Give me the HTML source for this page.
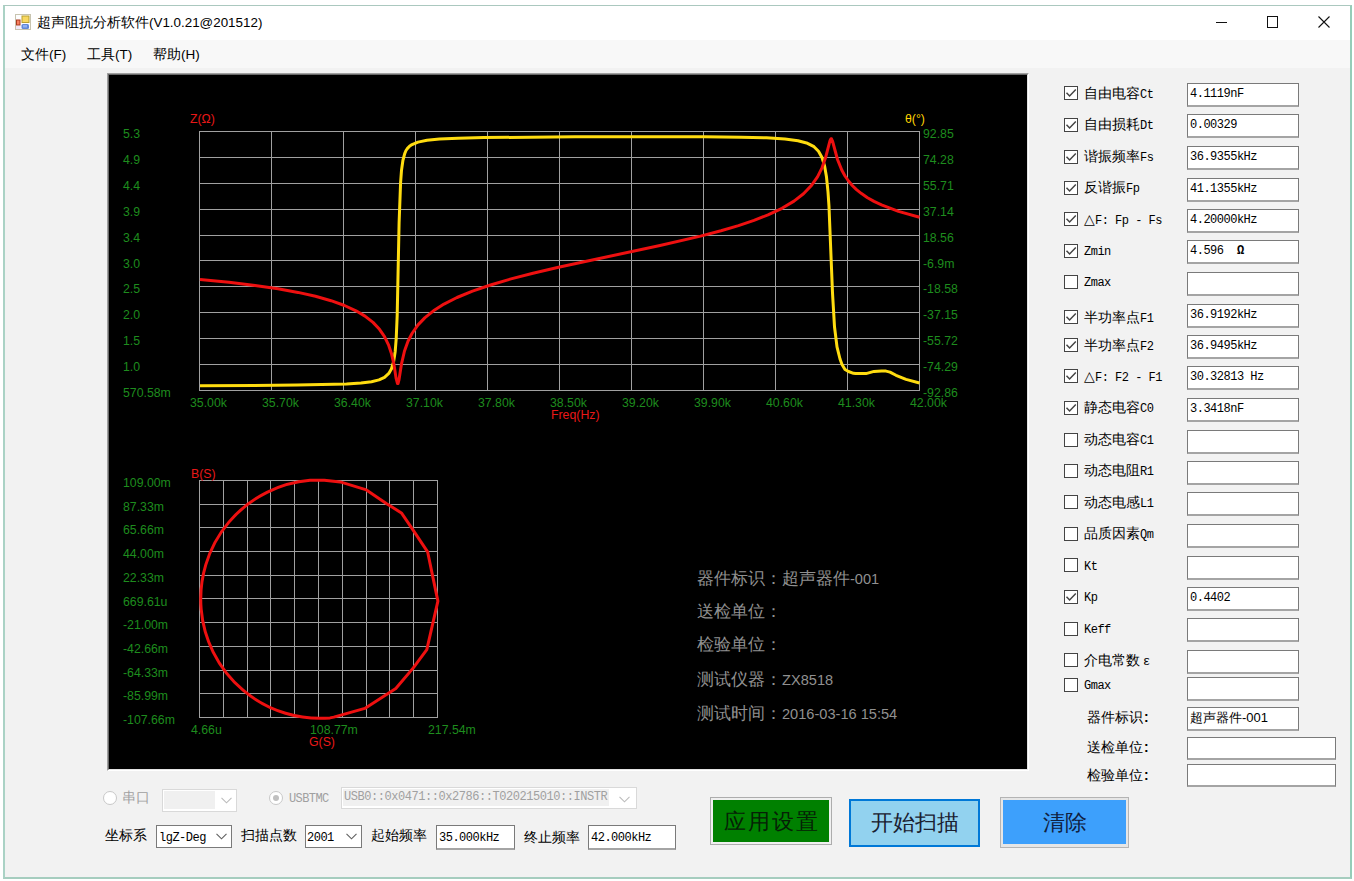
<!DOCTYPE html>
<html><head><meta charset="utf-8"><title>ui</title>
<style>
html,body{margin:0;padding:0}
body{width:1354px;height:881px;overflow:hidden;background:#fff;position:relative;font-family:"Liberation Sans",sans-serif;color:#000}
.a{position:absolute;white-space:nowrap}
.cl{font-size:12.3px;line-height:12px;color:#1e8c1e}
.info{font-size:16.8px;line-height:18px;color:#909090}
.lb{font-size:13.5px;line-height:14px;color:#000}
.m{font-family:"Liberation Mono",monospace;font-size:12px;letter-spacing:-0.5px}
.cb{width:12px;height:12px;border:1px solid #444;background:#fff}
.tb{height:21px;border:1px solid #7a7a7a;border-bottom:2px solid #a4a4a4;background:#fff}
.tbt{font-family:"Liberation Mono",monospace;font-size:12px;letter-spacing:-0.5px;line-height:12px}
</style></head><body>

<div class="a" style="left:3px;top:5px;width:1345px;height:871px;border-left:2px solid #aad2c5;border-right:2px solid #95cdb8;border-top:1px solid #abc8bf;border-bottom:2px solid #a6cdbf;background:#f2f2f2"></div>
<div class="a" style="left:5px;top:6px;width:1345px;height:34px;background:#fff"></div>
<div class="a" style="left:5px;top:40px;width:1345px;height:28px;background:#f8f8f8"></div>
<svg class="a" style="left:15px;top:14px" width="16" height="16" viewBox="0 0 16 16">
<rect x="0.5" y="0.5" width="15" height="15" fill="#fdfdfd" stroke="#c8c4b0"/>
<rect x="1" y="5.5" width="4.5" height="6" fill="#a83a20"/>
<rect x="2" y="6.5" width="2.5" height="4" fill="#f88060"/>
<rect x="1" y="12" width="4.5" height="3" fill="#f0e8f8"/>
<rect x="6.5" y="1.5" width="8" height="7.5" fill="#b8a030"/>
<rect x="7.5" y="2.5" width="6" height="5.5" fill="#f8d860"/>
<rect x="6.5" y="10" width="7.5" height="5" rx="1.5" fill="#6088d8"/>
<rect x="8" y="11" width="4" height="2.5" fill="#90b0f0"/>
</svg>
<div class="a" style="left:37px;top:14px;font-size:13.7px;line-height:17px;color:#000">超声阻抗分析软件<span style="font-size:13.4px">(V1.0.21@201512)</span></div>
<div class="a" style="left:1216px;top:22px;width:11px;height:1px;background:#111"></div>
<div class="a" style="left:1267px;top:16px;width:9px;height:10px;border:1px solid #111"></div>
<svg class="a" style="left:1318px;top:16px" width="12" height="12" viewBox="0 0 12 12"><path d="M0.5 0.5 L11.5 11.5 M11.5 0.5 L0.5 11.5" stroke="#111" stroke-width="1.1"/></svg>
<div class="a" style="left:21px;top:47px;font-size:13.5px;line-height:16px">文件(F)</div>
<div class="a" style="left:87px;top:47px;font-size:13.5px;line-height:16px">工具(T)</div>
<div class="a" style="left:153px;top:47px;font-size:13.5px;line-height:16px">帮助(H)</div>
<div class="a" style="left:107px;top:73px;width:920px;height:696px;border-top:1px solid #a0a0a0;border-left:1px solid #a0a0a0;border-right:1px solid #fff;border-bottom:1px solid #fff"></div>
<div class="a" style="left:108px;top:74px;width:918px;height:694px;border-top:1px solid #696969;border-left:1px solid #696969;border-right:1px solid #e3e3e3;border-bottom:1px solid #e3e3e3;background:#000"></div>
<svg class="a" style="left:0;top:0" width="1354" height="881" viewBox="0 0 1354 881">
<path d="M199.5 131 V391 M199 131.5 H920 M271.5 131 V391 M199 157.5 H920 M343.5 131 V391 M199 183.5 H920 M415.5 131 V391 M199 209.5 H920 M487.5 131 V391 M199 235.5 H920 M559.5 131 V391 M199 260.5 H920 M631.5 131 V391 M199 286.5 H920 M703.5 131 V391 M199 312.5 H920 M775.5 131 V391 M199 338.5 H920 M847.5 131 V391 M199 364.5 H920 M919.5 131 V391 M199 390.5 H920 M199.5 480 V718 M199 480.5 H438 M223.5 480 V718 M199 504.5 H438 M247.5 480 V718 M199 527.5 H438 M270.5 480 V718 M199 551.5 H438 M294.5 480 V718 M199 575.5 H438 M318.5 480 V718 M199 598.5 H438 M342.5 480 V718 M199 622.5 H438 M366.5 480 V718 M199 646.5 H438 M389.5 480 V718 M199 670.5 H438 M413.5 480 V718 M199 693.5 H438 M437.5 480 V718 M199 717.5 H438" stroke="#a0a0a0" stroke-width="1" fill="none"/>
<path d="M200.0 385.8 L297.0 385.1 L346.5 384.0 L361.0 383.0 L371.5 381.7 L379.0 379.9 L384.5 377.3 L388.8 373.4 L391.5 368.7 L393.6 361.7 L395.2 351.4 L396.2 338.7 L397.2 315.1 L399.1 222.7 L400.6 182.5 L401.5 170.4 L402.9 160.5 L404.7 153.6 L406.0 150.5 L407.5 148.4 L409.5 146.3 L412.0 144.6 L418.0 142.1 L427.0 140.3 L439.5 139.1 L458.0 138.2 L484.0 137.6 L575.0 136.8 L704.0 136.8 L741.0 137.2 L766.5 137.8 L785.0 139.0 L798.0 140.7 L807.5 143.3 L814.0 146.7 L818.5 151.2 L822.0 157.5 L824.5 165.6 L826.5 177.1 L828.0 191.8 L829.0 206.7 L832.5 292.9 L834.5 326.8 L837.0 346.9 L840.0 359.0 L842.0 364.5 L845.0 369.5 L848.5 371.5 L853.5 373.3 L855.5 373.6 L866.0 373.6 L874.0 371.4 L881.5 370.9 L886.0 371.1 L890.0 372.1 L896.0 375.3 L906.0 379.4 L919.5 383.0" stroke="#ffdc10" stroke-width="3" fill="none" stroke-linejoin="round"/>
<path d="M200.0 279.5 L229.0 282.3 L255.0 285.5 L278.0 288.8 L298.0 292.4 L315.5 296.3 L331.0 300.7 L344.5 305.5 L356.0 310.8 L365.0 316.1 L373.0 322.4 L379.5 329.3 L384.5 336.6 L388.5 344.8 L391.5 353.7 L394.0 364.6 L396.0 377.9 L397.5 383.6 L398.0 383.5 L399.0 379.8 L401.5 363.8 L404.5 351.0 L408.0 341.3 L412.0 333.5 L418.0 324.9 L425.0 317.6 L433.5 310.8 L444.0 304.1 L457.0 297.5 L472.5 291.2 L490.5 285.0 L511.0 278.9 L533.0 273.2 L558.5 267.2 L660.0 245.5 L700.5 236.1 L721.0 230.7 L738.5 225.6 L754.0 220.4 L768.0 214.9 L782.0 208.3 L794.0 201.1 L803.5 193.7 L811.5 185.4 L817.5 176.8 L822.0 167.8 L825.5 157.8 L830.0 140.6 L831.0 138.7 L831.5 138.8 L832.5 141.0 L837.5 159.5 L842.0 170.6 L845.0 176.0 L848.5 181.0 L852.5 185.7 L856.5 189.6 L861.5 193.6 L867.5 197.7 L874.0 201.4 L881.5 204.9 L898.5 211.4 L919.5 217.3" stroke="#ee1010" stroke-width="3" fill="none" stroke-linejoin="round"/>
<path d="M324.3 480.3 L310 480.3 A119 119 0 1 0 330 717.9 L333.8 717.1 L364.8 708.4 L395.8 688.5 L413.3 667.9 L426.8 649.6 L437.9 601.1 L432.4 574.9 L427.6 551.8 L413.3 530.4 L401.4 512.9 L386.3 503.4 L366.4 489.9 L340.2 481.9 Z" stroke="#ee1010" stroke-width="3" fill="none" stroke-linejoin="round"/>
</svg>
<div class="a cl" style="left:123px;top:128px">5.3</div>
<div class="a cl" style="left:923px;top:128px">92.85</div>
<div class="a cl" style="left:190px;top:397px">35.00k</div>
<div class="a cl" style="left:123px;top:154px">4.9</div>
<div class="a cl" style="left:923px;top:154px">74.28</div>
<div class="a cl" style="left:262px;top:397px">35.70k</div>
<div class="a cl" style="left:123px;top:180px">4.4</div>
<div class="a cl" style="left:923px;top:180px">55.71</div>
<div class="a cl" style="left:334px;top:397px">36.40k</div>
<div class="a cl" style="left:123px;top:206px">3.9</div>
<div class="a cl" style="left:923px;top:206px">37.14</div>
<div class="a cl" style="left:406px;top:397px">37.10k</div>
<div class="a cl" style="left:123px;top:232px">3.4</div>
<div class="a cl" style="left:923px;top:232px">18.56</div>
<div class="a cl" style="left:478px;top:397px">37.80k</div>
<div class="a cl" style="left:123px;top:258px">3.0</div>
<div class="a cl" style="left:923px;top:258px">-6.9m</div>
<div class="a cl" style="left:550px;top:397px">38.50k</div>
<div class="a cl" style="left:123px;top:283px">2.5</div>
<div class="a cl" style="left:923px;top:283px">-18.58</div>
<div class="a cl" style="left:622px;top:397px">39.20k</div>
<div class="a cl" style="left:123px;top:309px">2.0</div>
<div class="a cl" style="left:923px;top:309px">-37.15</div>
<div class="a cl" style="left:694px;top:397px">39.90k</div>
<div class="a cl" style="left:123px;top:335px">1.5</div>
<div class="a cl" style="left:923px;top:335px">-55.72</div>
<div class="a cl" style="left:766px;top:397px">40.60k</div>
<div class="a cl" style="left:123px;top:361px">1.0</div>
<div class="a cl" style="left:923px;top:361px">-74.29</div>
<div class="a cl" style="left:838px;top:397px">41.30k</div>
<div class="a cl" style="left:123px;top:387px">570.58m</div>
<div class="a cl" style="left:923px;top:387px">-92.86</div>
<div class="a cl" style="left:910px;top:397px">42.00k</div>
<div class="a cl" style="left:551px;top:409px;color:#e81818">Freq(Hz)</div>
<div class="a cl" style="left:190px;top:113px;color:#e81818">Z(Ω)</div>
<div class="a cl" style="left:905px;top:113px;color:#ffd400">θ(°)</div>
<div class="a cl" style="left:123px;top:477px">109.00m</div>
<div class="a cl" style="left:123px;top:501px">87.33m</div>
<div class="a cl" style="left:123px;top:524px">65.66m</div>
<div class="a cl" style="left:123px;top:548px">44.00m</div>
<div class="a cl" style="left:123px;top:572px">22.33m</div>
<div class="a cl" style="left:123px;top:596px">669.61u</div>
<div class="a cl" style="left:123px;top:619px">-21.00m</div>
<div class="a cl" style="left:123px;top:643px">-42.66m</div>
<div class="a cl" style="left:123px;top:667px">-64.33m</div>
<div class="a cl" style="left:123px;top:690px">-85.99m</div>
<div class="a cl" style="left:123px;top:714px">-107.66m</div>
<div class="a cl" style="left:191px;top:724px">4.66u</div>
<div class="a cl" style="left:310px;top:724px">108.77m</div>
<div class="a cl" style="left:428px;top:724px">217.54m</div>
<div class="a cl" style="left:191px;top:468px;color:#e81818">B(S)</div>
<div class="a cl" style="left:309px;top:736px;color:#e81818">G(S)</div>
<div class="a info" style="left:697px;top:570px">器件标识：超声器件<span style="font-size:14.6px">-001</span></div>
<div class="a info" style="left:697px;top:603px">送检单位：</div>
<div class="a info" style="left:697px;top:636px">检验单位：</div>
<div class="a info" style="left:697px;top:671px">测试仪器：<span style="font-size:14.6px">ZX8518</span></div>
<div class="a info" style="left:697px;top:705px">测试时间：<span style="font-size:14.6px">2016-03-16 15:54</span></div>
<div class="a cb" style="left:1064px;top:86px"><svg width="12" height="12" viewBox="0 0 12 12" style="position:absolute;left:0;top:0"><path d="M1.5 5.8 L4.6 9 L10.8 2.6" stroke="#444" stroke-width="1.5" fill="none"/></svg></div>
<div class="a lb" style="left:1084px;top:87px">自由电容<span class="m">Ct</span></div>
<div class="a tb" style="left:1187px;top:83px;width:110px"><div class="tbt" style="position:absolute;left:2px;top:4px">4.1119nF</div></div>
<div class="a cb" style="left:1064px;top:118px"><svg width="12" height="12" viewBox="0 0 12 12" style="position:absolute;left:0;top:0"><path d="M1.5 5.8 L4.6 9 L10.8 2.6" stroke="#444" stroke-width="1.5" fill="none"/></svg></div>
<div class="a lb" style="left:1084px;top:118px">自由损耗<span class="m">Dt</span></div>
<div class="a tb" style="left:1187px;top:114px;width:110px"><div class="tbt" style="position:absolute;left:2px;top:4px">0.00329</div></div>
<div class="a cb" style="left:1064px;top:150px"><svg width="12" height="12" viewBox="0 0 12 12" style="position:absolute;left:0;top:0"><path d="M1.5 5.8 L4.6 9 L10.8 2.6" stroke="#444" stroke-width="1.5" fill="none"/></svg></div>
<div class="a lb" style="left:1084px;top:150px">谐振频率<span class="m">Fs</span></div>
<div class="a tb" style="left:1187px;top:146px;width:110px"><div class="tbt" style="position:absolute;left:2px;top:4px">36.9355kHz</div></div>
<div class="a cb" style="left:1064px;top:181px"><svg width="12" height="12" viewBox="0 0 12 12" style="position:absolute;left:0;top:0"><path d="M1.5 5.8 L4.6 9 L10.8 2.6" stroke="#444" stroke-width="1.5" fill="none"/></svg></div>
<div class="a lb" style="left:1084px;top:181px">反谐振<span class="m">Fp</span></div>
<div class="a tb" style="left:1187px;top:178px;width:110px"><div class="tbt" style="position:absolute;left:2px;top:4px">41.1355kHz</div></div>
<div class="a cb" style="left:1064px;top:212px"><svg width="12" height="12" viewBox="0 0 12 12" style="position:absolute;left:0;top:0"><path d="M1.5 5.8 L4.6 9 L10.8 2.6" stroke="#444" stroke-width="1.5" fill="none"/></svg></div>
<div class="a lb" style="left:1084px;top:213px">△<span class="m">F: Fp - Fs</span></div>
<div class="a tb" style="left:1187px;top:209px;width:110px"><div class="tbt" style="position:absolute;left:2px;top:4px">4.20000kHz</div></div>
<div class="a cb" style="left:1064px;top:244px"><svg width="12" height="12" viewBox="0 0 12 12" style="position:absolute;left:0;top:0"><path d="M1.5 5.8 L4.6 9 L10.8 2.6" stroke="#444" stroke-width="1.5" fill="none"/></svg></div>
<div class="a lb" style="left:1084px;top:244px"><span class="m">Zmin</span></div>
<div class="a tb" style="left:1187px;top:240px;width:110px"><div class="tbt" style="position:absolute;left:2px;top:4px">4.596&nbsp; <b>Ω</b></div></div>
<div class="a cb" style="left:1064px;top:275px"></div>
<div class="a lb" style="left:1084px;top:275px"><span class="m">Zmax</span></div>
<div class="a tb" style="left:1187px;top:272px;width:110px"><div class="tbt" style="position:absolute;left:2px;top:4px"></div></div>
<div class="a cb" style="left:1064px;top:310px"><svg width="12" height="12" viewBox="0 0 12 12" style="position:absolute;left:0;top:0"><path d="M1.5 5.8 L4.6 9 L10.8 2.6" stroke="#444" stroke-width="1.5" fill="none"/></svg></div>
<div class="a lb" style="left:1084px;top:311px">半功率点<span class="m">F1</span></div>
<div class="a tb" style="left:1187px;top:304px;width:110px"><div class="tbt" style="position:absolute;left:2px;top:4px">36.9192kHz</div></div>
<div class="a cb" style="left:1064px;top:338px"><svg width="12" height="12" viewBox="0 0 12 12" style="position:absolute;left:0;top:0"><path d="M1.5 5.8 L4.6 9 L10.8 2.6" stroke="#444" stroke-width="1.5" fill="none"/></svg></div>
<div class="a lb" style="left:1084px;top:339px">半功率点<span class="m">F2</span></div>
<div class="a tb" style="left:1187px;top:335px;width:110px"><div class="tbt" style="position:absolute;left:2px;top:4px">36.9495kHz</div></div>
<div class="a cb" style="left:1064px;top:369px"><svg width="12" height="12" viewBox="0 0 12 12" style="position:absolute;left:0;top:0"><path d="M1.5 5.8 L4.6 9 L10.8 2.6" stroke="#444" stroke-width="1.5" fill="none"/></svg></div>
<div class="a lb" style="left:1084px;top:370px">△<span class="m">F: F2 - F1</span></div>
<div class="a tb" style="left:1187px;top:366px;width:110px"><div class="tbt" style="position:absolute;left:2px;top:4px">30.32813 Hz</div></div>
<div class="a cb" style="left:1064px;top:401px"><svg width="12" height="12" viewBox="0 0 12 12" style="position:absolute;left:0;top:0"><path d="M1.5 5.8 L4.6 9 L10.8 2.6" stroke="#444" stroke-width="1.5" fill="none"/></svg></div>
<div class="a lb" style="left:1084px;top:401px">静态电容<span class="m">C0</span></div>
<div class="a tb" style="left:1187px;top:398px;width:110px"><div class="tbt" style="position:absolute;left:2px;top:4px">3.3418nF</div></div>
<div class="a cb" style="left:1064px;top:433px"></div>
<div class="a lb" style="left:1084px;top:433px">动态电容<span class="m">C1</span></div>
<div class="a tb" style="left:1187px;top:430px;width:110px"><div class="tbt" style="position:absolute;left:2px;top:4px"></div></div>
<div class="a cb" style="left:1064px;top:464px"></div>
<div class="a lb" style="left:1084px;top:464px">动态电阻<span class="m">R1</span></div>
<div class="a tb" style="left:1187px;top:461px;width:110px"><div class="tbt" style="position:absolute;left:2px;top:4px"></div></div>
<div class="a cb" style="left:1064px;top:495px"></div>
<div class="a lb" style="left:1084px;top:496px">动态电感<span class="m">L1</span></div>
<div class="a tb" style="left:1187px;top:492px;width:110px"><div class="tbt" style="position:absolute;left:2px;top:4px"></div></div>
<div class="a cb" style="left:1064px;top:527px"></div>
<div class="a lb" style="left:1084px;top:527px">品质因素<span class="m">Qm</span></div>
<div class="a tb" style="left:1187px;top:524px;width:110px"><div class="tbt" style="position:absolute;left:2px;top:4px"></div></div>
<div class="a cb" style="left:1064px;top:558px"></div>
<div class="a lb" style="left:1084px;top:559px"><span class="m">Kt</span></div>
<div class="a tb" style="left:1187px;top:556px;width:110px"><div class="tbt" style="position:absolute;left:2px;top:4px"></div></div>
<div class="a cb" style="left:1064px;top:590px"><svg width="12" height="12" viewBox="0 0 12 12" style="position:absolute;left:0;top:0"><path d="M1.5 5.8 L4.6 9 L10.8 2.6" stroke="#444" stroke-width="1.5" fill="none"/></svg></div>
<div class="a lb" style="left:1084px;top:590px"><span class="m">Kp</span></div>
<div class="a tb" style="left:1187px;top:587px;width:110px"><div class="tbt" style="position:absolute;left:2px;top:4px">0.4402</div></div>
<div class="a cb" style="left:1064px;top:622px"></div>
<div class="a lb" style="left:1084px;top:622px"><span class="m">Keff</span></div>
<div class="a tb" style="left:1187px;top:618px;width:110px"><div class="tbt" style="position:absolute;left:2px;top:4px"></div></div>
<div class="a cb" style="left:1064px;top:653px"></div>
<div class="a lb" style="left:1084px;top:654px">介电常数<span class="m"><span style="margin-left:3px">ε</span></span></div>
<div class="a tb" style="left:1187px;top:650px;width:110px"><div class="tbt" style="position:absolute;left:2px;top:4px"></div></div>
<div class="a cb" style="left:1064px;top:678px"></div>
<div class="a lb" style="left:1084px;top:678px"><span class="m">Gmax</span></div>
<div class="a tb" style="left:1187px;top:677px;width:110px"><div class="tbt" style="position:absolute;left:2px;top:4px"></div></div>
<div class="a lb" style="left:1087px;top:710px;font-size:13.8px;line-height:16px">器件标识<b style="margin-left:1px">:</b></div>
<div class="a tb" style="left:1187px;top:707px;width:110px;height:21px"><div style="position:absolute;left:2px;top:3px;font-size:13px;line-height:14px">超声器件-001</div></div>
<div class="a lb" style="left:1087px;top:740px;font-size:13.8px;line-height:16px">送检单位<b style="margin-left:1px">:</b></div>
<div class="a tb" style="left:1187px;top:737px;width:147px;height:20px"><div style="position:absolute;left:2px;top:3px;font-size:13px;line-height:14px"></div></div>
<div class="a lb" style="left:1087px;top:768px;font-size:13.8px;line-height:16px">检验单位<b style="margin-left:1px">:</b></div>
<div class="a tb" style="left:1187px;top:764px;width:147px;height:20px"><div style="position:absolute;left:2px;top:3px;font-size:13px;line-height:14px"></div></div>
<div class="a" style="left:103px;top:791px;width:12px;height:12px;border:1px solid #c8c8c8;border-radius:50%;background:#fff"></div>
<div class="a lb" style="left:122px;top:791px;color:#a0a0a0">串口</div>
<div class="a" style="left:162px;top:789px;width:73px;height:21px;border:1px solid #d9d9d9;background:#fff"></div>
<div class="a" style="left:164px;top:791px;width:51px;height:18px;background:#f0f0f0"></div>
<svg class="a" style="left:221px;top:797px" width="11" height="7" viewBox="0 0 11 7"><path d="M0.5 0.8 L5.5 5.8 L10.5 0.8" stroke="#bcbcbc" stroke-width="1.1" fill="none"/></svg>
<div class="a" style="left:269px;top:791px;width:12px;height:12px;border:1px solid #c8c8c8;border-radius:50%;background:#fff"></div>
<div class="a" style="left:273px;top:795px;width:6px;height:6px;border-radius:50%;background:#c0c0c0"></div>
<div class="a m" style="left:289px;top:792px;color:#a0a0a0;font-size:12px;letter-spacing:-0.6px">USBTMC</div>
<div class="a" style="left:341px;top:787px;width:294px;height:20px;border:1px solid #d9d9d9;background:#fff"></div>
<div class="a" style="left:343px;top:789px;width:266px;height:17px;background:#f0f0f0"></div>
<div class="a m" style="left:344px;top:790px;color:#a0a0a0;font-size:12px;letter-spacing:-0.45px">USB0::0x0471::0x2786::T020215010::INSTR</div>
<svg class="a" style="left:619px;top:796px" width="11" height="7" viewBox="0 0 11 7"><path d="M0.5 0.8 L5.5 5.8 L10.5 0.8" stroke="#bcbcbc" stroke-width="1.1" fill="none"/></svg>
<div class="a lb" style="left:105px;top:829px">坐标系</div>
<div class="a" style="left:156px;top:825px;width:74px;height:21px;border:1px solid #7a7a7a;background:#fff"></div>
<div class="a m" style="left:159px;top:831px">lgZ-Deg</div>
<svg class="a" style="left:216px;top:833px" width="11" height="7" viewBox="0 0 11 7"><path d="M0.5 0.8 L5.5 5.8 L10.5 0.8" stroke="#606060" stroke-width="1.1" fill="none"/></svg>
<div class="a lb" style="left:241px;top:829px">扫描点数</div>
<div class="a" style="left:305px;top:825px;width:55px;height:21px;border:1px solid #7a7a7a;background:#fff"></div>
<div class="a m" style="left:307px;top:831px">2001</div>
<svg class="a" style="left:346px;top:833px" width="11" height="7" viewBox="0 0 11 7"><path d="M0.5 0.8 L5.5 5.8 L10.5 0.8" stroke="#606060" stroke-width="1.1" fill="none"/></svg>
<div class="a lb" style="left:371px;top:829px">起始频率</div>
<div class="a tb" style="left:436px;top:825px;width:77px;height:22px"><div class="tbt" style="position:absolute;left:2px;top:6px">35.000kHz</div></div>
<div class="a lb" style="left:524px;top:831px">终止频率</div>
<div class="a tb" style="left:588px;top:825px;width:86px;height:22px"><div class="tbt" style="position:absolute;left:2px;top:6px">42.000kHz</div></div>
<div class="a" style="left:710px;top:797px;width:120px;height:46px;border:1px solid #adadad;background:#f0f0f0"></div>
<div class="a" style="left:713px;top:800px;width:116px;height:42px;background:#008000"></div>
<div class="a" style="left:713px;top:809px;width:116px;text-align:center;font-size:22px;line-height:26px;letter-spacing:2px;text-indent:2px;color:#062006">应用设置</div>
<div class="a" style="left:849px;top:799px;width:127px;height:44px;border:2px solid #0078d7;background:#92d2ef"></div>
<div class="a" style="left:851px;top:810px;width:127px;text-align:center;font-size:22px;line-height:26px;color:#1a2030">开始扫描</div>
<div class="a" style="left:1000px;top:797px;width:127px;height:49px;border:1px solid #b4b4b4;background:#e6e6e6"></div>
<div class="a" style="left:1003px;top:800px;width:123px;height:44px;background:#3da0fc"></div>
<div class="a" style="left:1003px;top:810px;width:123px;text-align:center;font-size:22px;line-height:26px;color:#102040">清除</div>
</body></html>
